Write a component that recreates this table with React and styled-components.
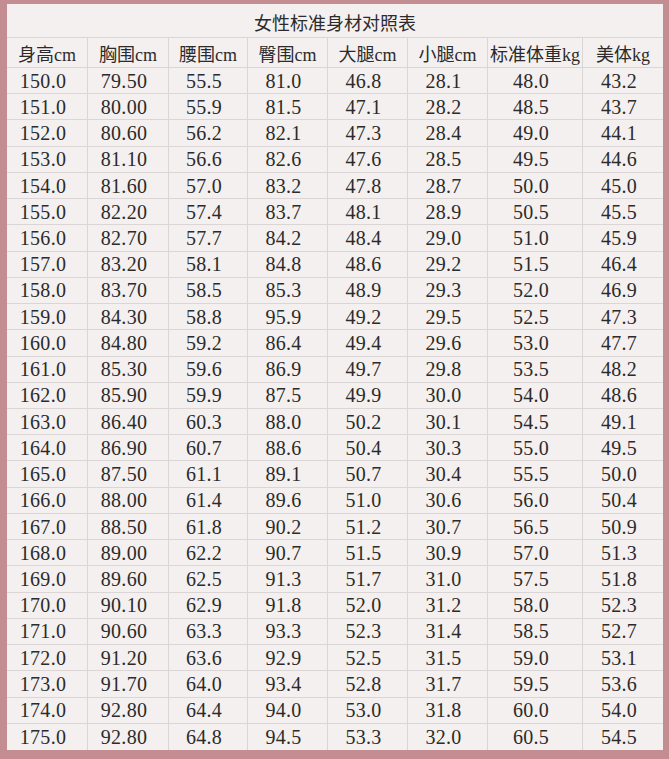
import styled, { createGlobalStyle } from 'styled-components';

const GlobalStyle = createGlobalStyle`
  html, body {
    margin: 0;
    padding: 0;
    background: #c38d92;
  }
  * {
    box-sizing: border-box;
  }
`;

const columns = ['身高cm', '胸围cm', '腰围cm', '臀围cm', '大腿cm', '小腿cm', '标准体重kg', '美体kg'];

const rows = [
  ['150.0', '79.50', '55.5', '81.0', '46.8', '28.1', '48.0', '43.2'],
  ['151.0', '80.00', '55.9', '81.5', '47.1', '28.2', '48.5', '43.7'],
  ['152.0', '80.60', '56.2', '82.1', '47.3', '28.4', '49.0', '44.1'],
  ['153.0', '81.10', '56.6', '82.6', '47.6', '28.5', '49.5', '44.6'],
  ['154.0', '81.60', '57.0', '83.2', '47.8', '28.7', '50.0', '45.0'],
  ['155.0', '82.20', '57.4', '83.7', '48.1', '28.9', '50.5', '45.5'],
  ['156.0', '82.70', '57.7', '84.2', '48.4', '29.0', '51.0', '45.9'],
  ['157.0', '83.20', '58.1', '84.8', '48.6', '29.2', '51.5', '46.4'],
  ['158.0', '83.70', '58.5', '85.3', '48.9', '29.3', '52.0', '46.9'],
  ['159.0', '84.30', '58.8', '95.9', '49.2', '29.5', '52.5', '47.3'],
  ['160.0', '84.80', '59.2', '86.4', '49.4', '29.6', '53.0', '47.7'],
  ['161.0', '85.30', '59.6', '86.9', '49.7', '29.8', '53.5', '48.2'],
  ['162.0', '85.90', '59.9', '87.5', '49.9', '30.0', '54.0', '48.6'],
  ['163.0', '86.40', '60.3', '88.0', '50.2', '30.1', '54.5', '49.1'],
  ['164.0', '86.90', '60.7', '88.6', '50.4', '30.3', '55.0', '49.5'],
  ['165.0', '87.50', '61.1', '89.1', '50.7', '30.4', '55.5', '50.0'],
  ['166.0', '88.00', '61.4', '89.6', '51.0', '30.6', '56.0', '50.4'],
  ['167.0', '88.50', '61.8', '90.2', '51.2', '30.7', '56.5', '50.9'],
  ['168.0', '89.00', '62.2', '90.7', '51.5', '30.9', '57.0', '51.3'],
  ['169.0', '89.60', '62.5', '91.3', '51.7', '31.0', '57.5', '51.8'],
  ['170.0', '90.10', '62.9', '91.8', '52.0', '31.2', '58.0', '52.3'],
  ['171.0', '90.60', '63.3', '93.3', '52.3', '31.4', '58.5', '52.7'],
  ['172.0', '91.20', '63.6', '92.9', '52.5', '31.5', '59.0', '53.1'],
  ['173.0', '91.70', '64.0', '93.4', '52.8', '31.7', '59.5', '53.6'],
  ['174.0', '92.80', '64.4', '94.0', '53.0', '31.8', '60.0', '54.0'],
  ['175.0', '92.80', '64.8', '94.5', '53.3', '32.0', '60.5', '54.5'],
];

const Frame = styled.div`
  width: 669px;
  height: 759px;
  padding: 4px 6px 9px 7px;
  background: #c38d92;
`;

const Sheet = styled.div`
  display: grid;
  grid-template-columns: 81px 81px 79px 80px 80px 80px 95px 80px;
  grid-template-rows: 34px 30px repeat(26, 1fr);
  height: 100%;
  background: #f5f0f0;
  color: #2b2b2b;
  font-family: 'Liberation Serif', 'Noto Sans CJK SC', serif;
`;

const Title = styled.div`
  grid-column: 1 / -1;
  display: flex;
  align-items: center;
  justify-content: center;
  font-size: 18px;
  border-bottom: 1px solid #dcd5d5;
  padding-top: 2px;
`;

const Cell = styled.div`
  display: flex;
  align-items: center;
  justify-content: center;
  border-bottom: ${p => (p.$last ? 'none' : '1px solid #dcd5d5')};
  border-right: ${p => (p.$edge ? 'none' : '1px solid #dcd5d5')};
  white-space: nowrap;
`;

const HeadCell = styled(Cell)`
  font-size: 18px;
  padding-top: 1px;
`;

const DataCell = styled(Cell)`
  font-size: 20px;
  letter-spacing: 0.3px;
  padding-right: 8px;
  padding-top: 1px;
`;

export default function App() {
  return (
    <>
      <GlobalStyle />
      <Frame>
        <Sheet>
          <Title>女性标准身材对照表</Title>
          {columns.map((c, i) => (
            <HeadCell key={c} $edge={i === columns.length - 1}>
              {c}
            </HeadCell>
          ))}
          {rows.map((r, ri) =>
            r.map((v, ci) => (
              <DataCell key={`${ri}_${ci}`} $edge={ci === r.length - 1} $last={ri === rows.length - 1}>
                {v}
              </DataCell>
            ))
          )}
        </Sheet>
      </Frame>
    </>
  );
}
